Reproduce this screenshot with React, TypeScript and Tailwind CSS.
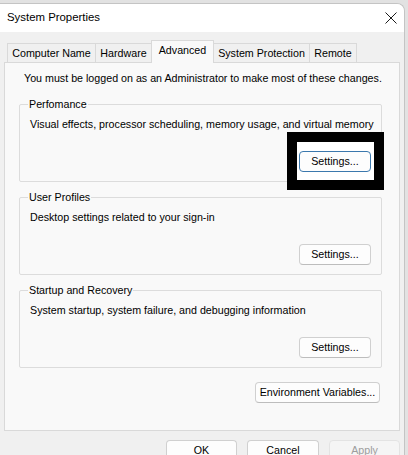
import type { ReactNode } from 'react';

const FONT = { fontFamily: '"Liberation Sans", Arial, sans-serif' };

function WinButton({
  children,
  width,
  focused = false,
  disabled = false,
  className = '',
}: {
  children: ReactNode;
  width: string;
  focused?: boolean;
  disabled?: boolean;
  className?: string;
}) {
  const tone = disabled
    ? 'bg-[#f5f5f5] border-[#e3e3e3] text-[#9d9d9d]'
    : focused
      ? 'bg-[#fdfdfd] border-[#3b78ad] text-black'
      : 'bg-[#fdfdfd] border-[#d0d0d0] border-b-[#bdbdbd] text-black';
  return (
    <button
      type="button"
      className={`relative z-10 h-[21px] ${width} rounded-[4px] border text-[10.7px] leading-none whitespace-nowrap flex items-center justify-center ${tone} ${className}`}
    >
      {children}
    </button>
  );
}

function GroupBox({
  title,
  text,
  focused = false,
  className = '',
}: {
  title: string;
  text: string;
  focused?: boolean;
  className?: string;
}) {
  return (
    <div className={`relative border border-[#dcdcdc] rounded-[2px] pt-[11px] pb-[9px] px-[10px] ${className}`}>
      <span className="absolute left-[8px] top-[-9px] px-[1px] bg-[#f9f9f9] text-[10.7px] leading-[16px]">
        {title}
      </span>
      <p className="text-[10.7px] leading-[16px] whitespace-nowrap">{text}</p>
      <div className="mt-[19px] flex justify-end">
        <WinButton width="w-[72px]" focused={focused}>
          Settings...
        </WinButton>
      </div>
    </div>
  );
}

const TABS = [
  { label: 'Computer Name', w: 'w-[89px]' },
  { label: 'Hardware', w: 'w-[57px]' },
  { label: 'Advanced', w: 'w-[63px]', active: true },
  { label: 'System Protection', w: 'w-[97px]' },
  { label: 'Remote', w: 'w-[48px]' },
];

export default function App() {
  return (
    <div className="w-[408px] h-[455px] overflow-hidden bg-[#e2e2e2] flex flex-col text-black" style={FONT}>
      {/* sliver of the window behind */}
      <div className="h-[3px] shrink-0" />

      <div className="flex-1 mr-[3px] bg-[#f0f0f0] border-t border-r border-[#c4c4c4] rounded-tr-[8px] overflow-hidden flex flex-col">
        {/* title bar */}
        <div className="h-[28px] shrink-0 bg-white flex items-center justify-between pl-[7px] pr-[6px]">
          <span className="text-[11.4px] leading-none">System Properties</span>
          <svg width="12" height="12" viewBox="0 0 12 12" className="mr-[1px]">
            <path d="M0.5 0.5 L11.5 11.5 M11.5 0.5 L0.5 11.5" stroke="#1a1a1a" strokeWidth="1" fill="none" />
          </svg>
        </div>

        <div className="flex-1 pt-[8px] pl-[4px] pr-[4px]">
          {/* tabs */}
          <div className="h-[22px] flex items-end pl-[3px]">
            {TABS.map((t, i) => (
              <div
                key={t.label}
                className={`${t.w} ${i > 0 ? '-ml-px' : ''} border border-b-0 border-[#d9d9d9] flex items-center justify-center text-[10.7px] leading-none whitespace-nowrap ${
                  t.active ? 'relative z-10 h-[23px] -mb-px bg-[#f9f9f9] pb-[3px]' : 'h-[19px] bg-[#f0f0f0]'
                }`}
              >
                {t.label}
              </div>
            ))}
          </div>

          {/* tab page */}
          <div className="relative h-[369px] border border-[#d9d9d9] bg-[#f9f9f9] pt-[7px] pl-[14px] pr-[17px]">
            <p className="pl-[5px] text-[10.7px] leading-[16px] whitespace-nowrap">
              You must be logged on as an Administrator to make most of these changes.
            </p>

            <GroupBox
              className="mt-[18px]"
              title="Perfomance"
              text="Visual effects, processor scheduling, memory usage, and virtual memory"
              focused
            />
            <GroupBox className="mt-[15px]" title="User Profiles" text="Desktop settings related to your sign-in" />
            <GroupBox
              className="mt-[15px]"
              title="Startup and Recovery"
              text="System startup, system failure, and debugging information"
            />

            <div className="mt-[14px] flex justify-end pr-[2px]">
              <WinButton width="w-[125px]">Environment Variables...</WinButton>
            </div>

            {/* annotation box drawn over the screenshot */}
            <div className="absolute left-[282px] top-[69px] w-[97px] h-[58px] border-[10px] border-black bg-white" />
          </div>

          {/* dialog buttons */}
          <div className="mt-[9px] flex justify-end gap-[10px]">
            <WinButton width="w-[71px]">OK</WinButton>
            <WinButton width="w-[72px]">Cancel</WinButton>
            <WinButton width="w-[71px]" disabled>
              Apply
            </WinButton>
          </div>
        </div>
      </div>
    </div>
  );
}
